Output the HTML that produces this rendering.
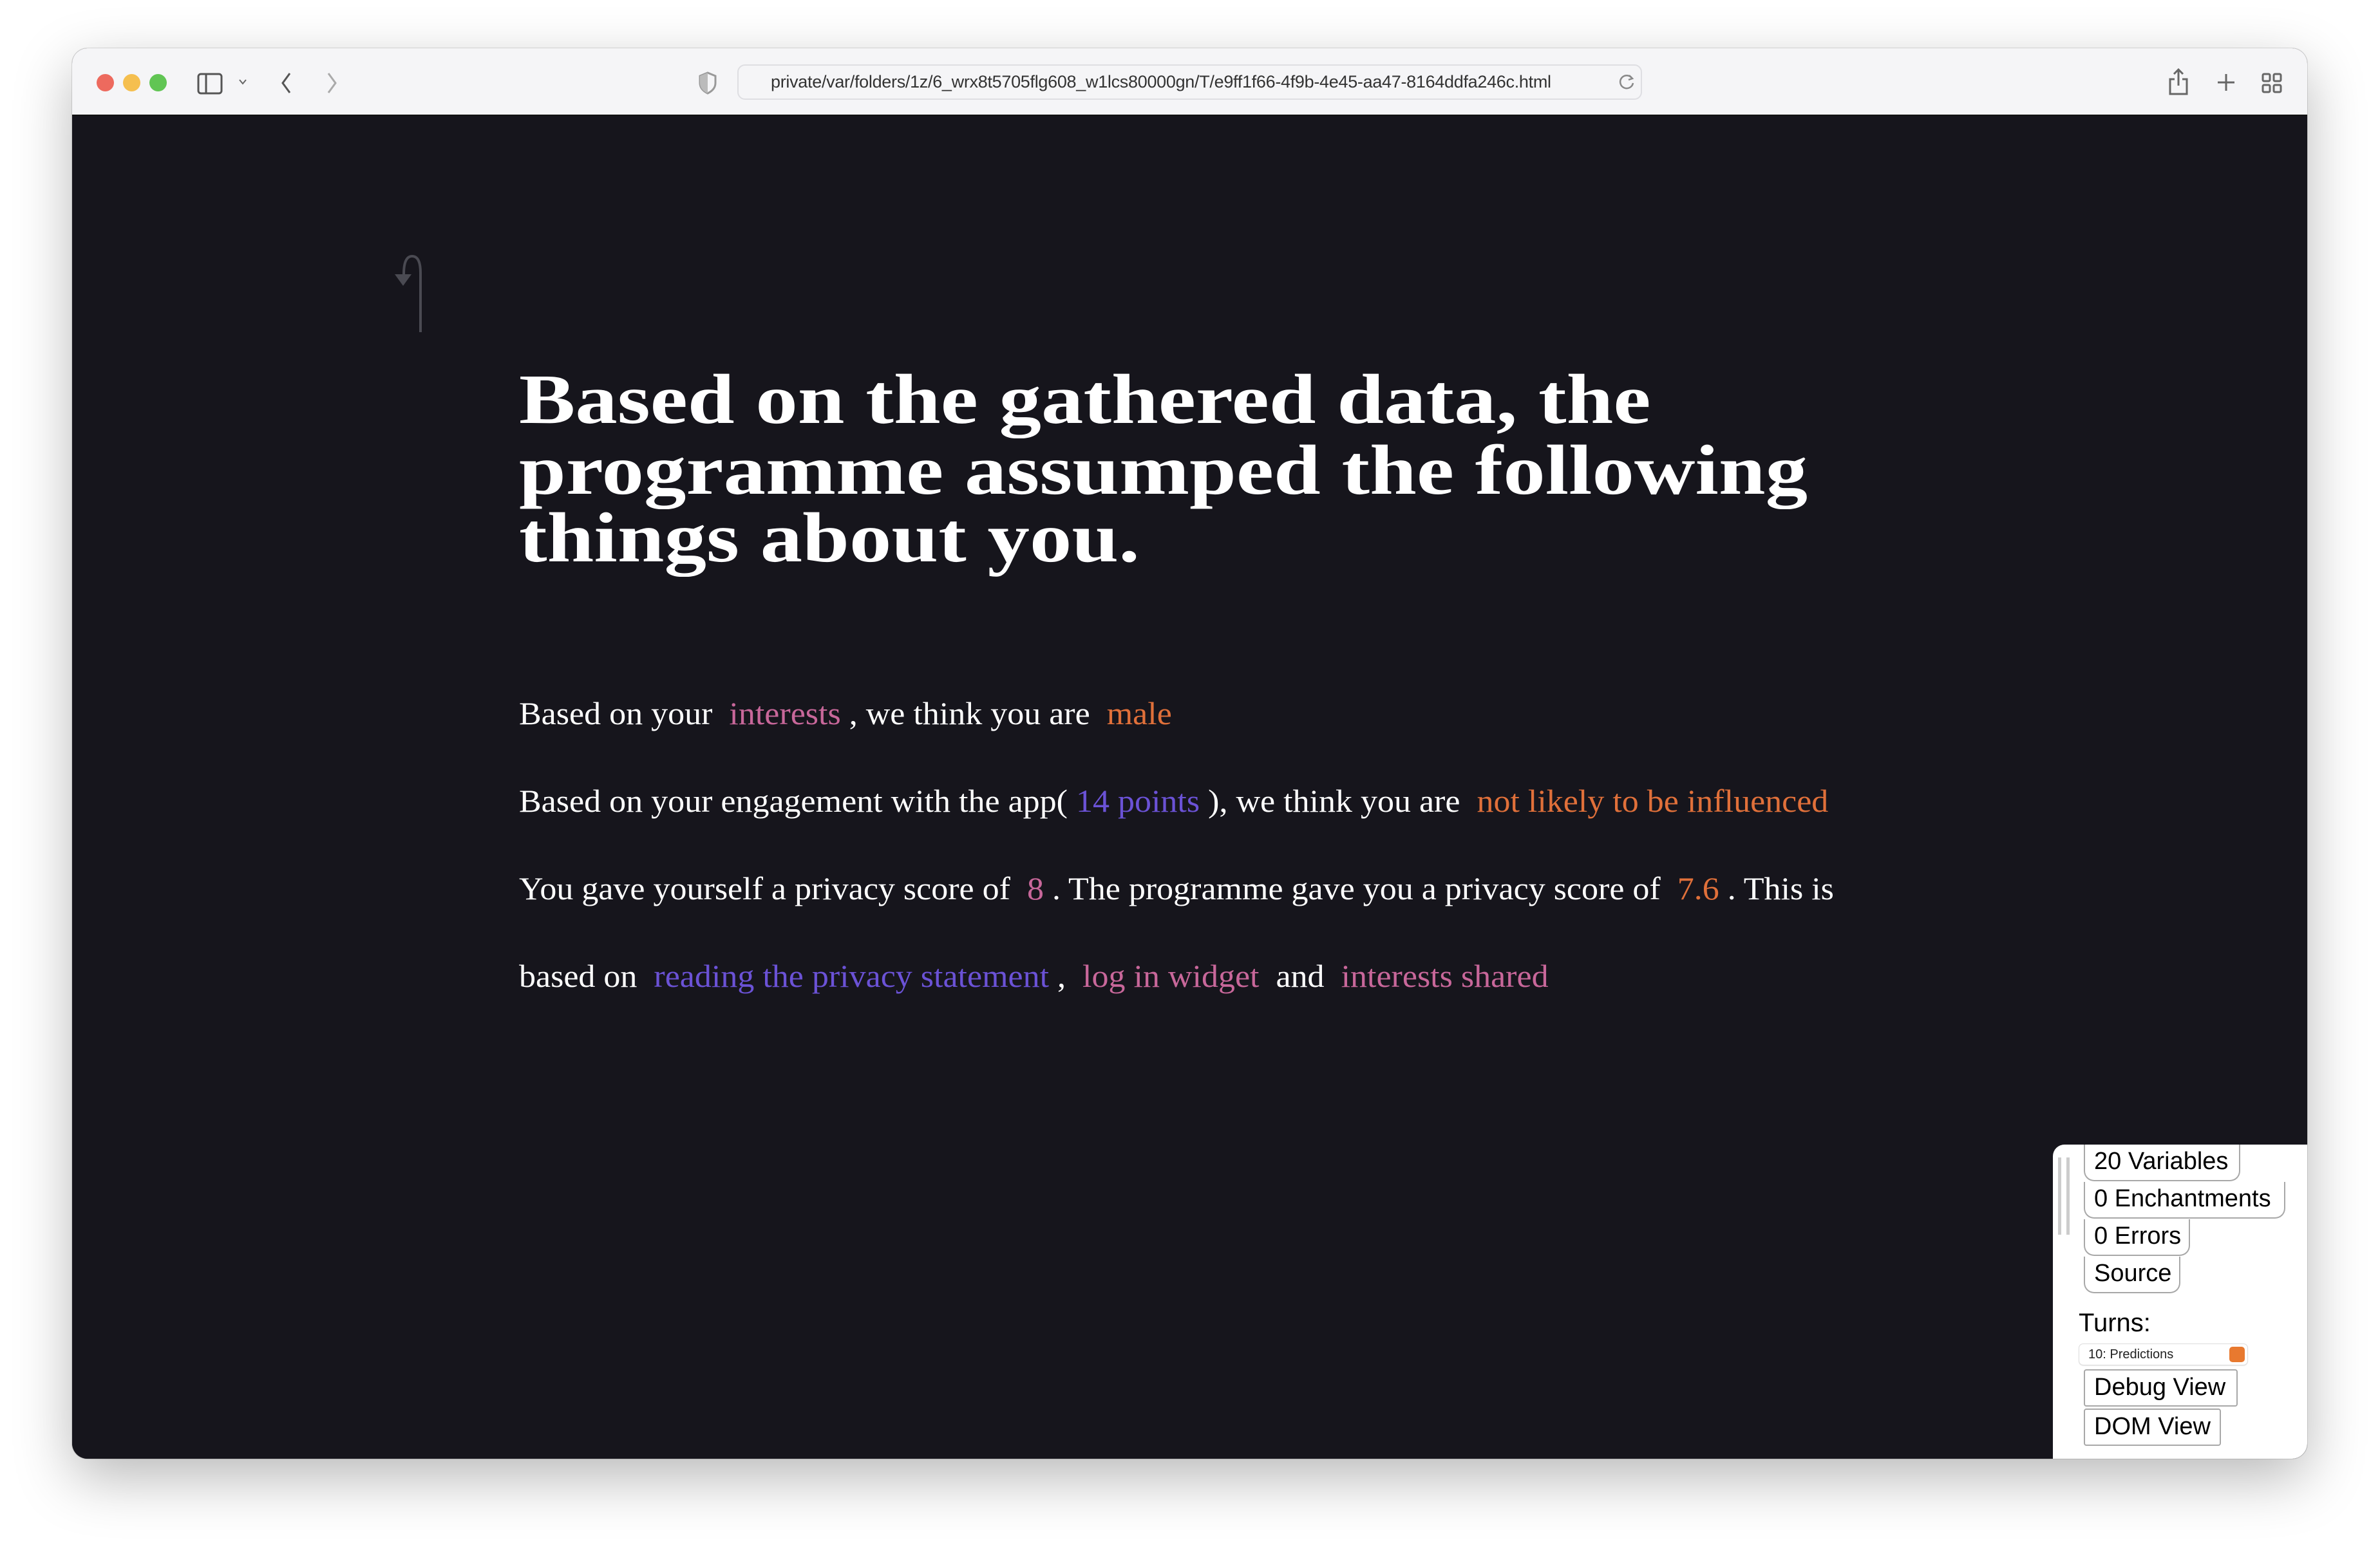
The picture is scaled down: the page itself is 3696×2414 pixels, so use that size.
<!DOCTYPE html>
<html><head><meta charset="utf-8"><style>
*{margin:0;padding:0;box-sizing:border-box}
body{width:3696px;height:2414px;background:#fff;position:relative;overflow:hidden;font-family:"Liberation Sans",sans-serif}
.win{position:absolute;left:112px;top:75px;width:3471px;height:2191px;border-radius:24px;overflow:hidden;box-shadow:0 30px 90px rgba(0,0,0,.28),0 0 0 1px rgba(0,0,0,.12);background:#16151c}
.tb{position:absolute;left:0;top:0;width:100%;height:105px;background:#f5f5f7;border-bottom:2px solid #111}
.dot{position:absolute;top:40px;width:27px;height:27px;border-radius:50%}
.url{position:absolute;left:1033px;top:25px;width:1405px;height:55px;border:2px solid #dedee2;border-radius:12px;background:#f5f5f7;font-size:27px;color:#333;line-height:51px;padding-left:50px;letter-spacing:-.3px}
.content{position:absolute;left:0;top:105px;right:0;bottom:0;background:#16151c}
.h{position:absolute;left:694px;color:#fff;font-family:"Liberation Serif",serif;font-weight:bold;font-size:110px;transform-origin:left bottom;transform:scaleX(1.19);white-space:nowrap;line-height:1}
.p{position:absolute;left:694px;color:#fff;font-family:"Liberation Serif",serif;font-size:50px;white-space:pre;transform-origin:left bottom;transform:scaleX(1.04);line-height:1}
.pk{color:#c8679a}.or{color:#e0703a}.pu{color:#6b52d6}
.panel{position:absolute;left:3076px;top:1598px;width:400px;height:500px;background:#fff;border-top-left-radius:18px}
.btn{position:absolute;left:48px;height:58px;border:2px solid #a8a8a8;border-radius:0 0 16px 16px;border-top:none;font-size:38px;color:#000;padding:0 12px 0 14px;line-height:52px;background:#fff;white-space:nowrap}
.btn2{border-top:2px solid #a8a8a8;border-radius:4px}
</style></head><body>
<div class="win">
 <div class="tb">
  <div class="dot" style="left:38px;background:#ed6a5e"></div>
  <div class="dot" style="left:79px;background:#f5bf4f"></div>
  <div class="dot" style="left:120px;background:#61c554"></div>
  <svg style="position:absolute;left:194px;top:38px" width="40" height="34" viewBox="0 0 40 34"><rect x="2" y="2" width="36" height="30" rx="4" fill="none" stroke="#555" stroke-width="3"/><line x1="14" y1="2" x2="14" y2="32" stroke="#555" stroke-width="3"/></svg>
  <svg style="position:absolute;left:258px;top:46px" width="14" height="12"><path d="M2 3 L7 9 L12 3" fill="none" stroke="#666" stroke-width="2"/></svg>
  <svg style="position:absolute;left:322px;top:36px" width="20" height="36"><path d="M16 3 L5 18 L16 33" fill="none" stroke="#555" stroke-width="3"/></svg>
  <svg style="position:absolute;left:394px;top:36px" width="20" height="36"><path d="M4 3 L15 18 L4 33" fill="none" stroke="#aaa" stroke-width="3"/></svg>
  <svg style="position:absolute;left:972px;top:36px" width="30" height="36"><path d="M15 2 L27 7 L27 18 Q27 28 15 34 Q3 28 3 18 L3 7 Z" fill="none" stroke="#999" stroke-width="3"/><path d="M15 2 L3 7 L3 18 Q3 28 15 34 Z" fill="#bbb"/></svg>
  <div class="url">private/var/folders/1z/6_wrx8t5705flg608_w1lcs80000gn/T/e9ff1f66-4f9b-4e45-aa47-8164ddfa246c.html</div>
  <svg style="position:absolute;left:2400px;top:38px" width="28" height="30"><path d="M22 8 A10 10 0 1 0 24 16" fill="none" stroke="#888" stroke-width="2.5"/><path d="M18 4 L23 9 L17 11" fill="none" stroke="#888" stroke-width="2.5"/></svg>
  <svg style="position:absolute;left:3254px;top:30px" width="34" height="44"><path d="M17 3 V28 M10 10 L17 3 L24 10 M11 18 H4 V41 H30 V18 H23" fill="none" stroke="#666" stroke-width="3"/></svg>
  <svg style="position:absolute;left:3330px;top:38px" width="30" height="30"><path d="M15 2 V28 M2 15 H28" stroke="#666" stroke-width="3"/></svg>
  <svg style="position:absolute;left:3400px;top:38px" width="32" height="32"><g fill="none" stroke="#666" stroke-width="3"><rect x="2" y="2" width="11" height="11" rx="2"/><rect x="19" y="2" width="11" height="11" rx="2"/><rect x="2" y="19" width="11" height="11" rx="2"/><rect x="19" y="19" width="11" height="11" rx="2"/></g></svg>
 </div>
 <div class="content">
  <svg style="position:absolute;left:485px;top:212px" width="70" height="130" viewBox="0 0 70 130"><path d="M56 124 V32 Q56 6 43 6 Q30 6 30 34" fill="none" stroke="#4a4a52" stroke-width="4"/><path d="M16 34 L42 34 L29 52 Z" fill="#4a4a52"/></svg>
  <div class="h" style="top:385px">Based on the gathered data, the</div>
  <div class="h" style="top:495px">programme assumped the following</div>
  <div class="h" style="top:600px">things about you.</div>
  <div class="p" style="top:903px">Based on your  <span class="pk">interests</span> , we think you are  <span class="or">male</span></div>
  <div class="p" style="top:1039px">Based on your engagement with the app( <span class="pu">14 points</span> ), we think you are  <span class="or">not likely to be influenced</span></div>
  <div class="p" style="top:1175px">You gave yourself a privacy score of  <span class="pk">8</span> . The programme gave you a privacy score of  <span class="or">7.6</span> . This is</div>
  <div class="p" style="top:1311px">based on  <span class="pu">reading the privacy statement</span> ,  <span class="pk">log in widget</span>  and  <span class="pk">interests shared</span></div>
  <div class="panel">
   <div style="position:absolute;left:8px;top:20px;width:5px;height:120px;background:#ccc"></div>
   <div style="position:absolute;left:21px;top:20px;width:5px;height:120px;background:#ccc"></div>
   <div class="btn" style="top:0;width:243px;height:57px">20 Variables</div>
   <div class="btn" style="top:58px;width:313px;height:57px">0 Enchantments</div>
   <div class="btn" style="top:116px;width:165px;height:57px">0 Errors</div>
   <div class="btn" style="top:174px;width:150px;height:57px">Source</div>
   <div style="position:absolute;left:40px;top:255px;font-size:40px;color:#000">Turns:</div>
   <div style="position:absolute;left:41px;top:310px;width:261px;height:32px;border-radius:6px;box-shadow:0 0 0 1px #ddd,0 1px 2px rgba(0,0,0,.2);font-size:20px;line-height:32px;padding-left:14px;color:#222">10: Predictions<div style="position:absolute;right:4px;top:4px;width:24px;height:24px;border-radius:5px;background:#e8792f"></div></div>
   <div class="btn btn2" style="top:349px;width:239px;height:58px">Debug View</div>
   <div class="btn btn2" style="top:410px;width:213px;height:58px">DOM View</div>
  </div>
 </div>
</div>
</body></html>
